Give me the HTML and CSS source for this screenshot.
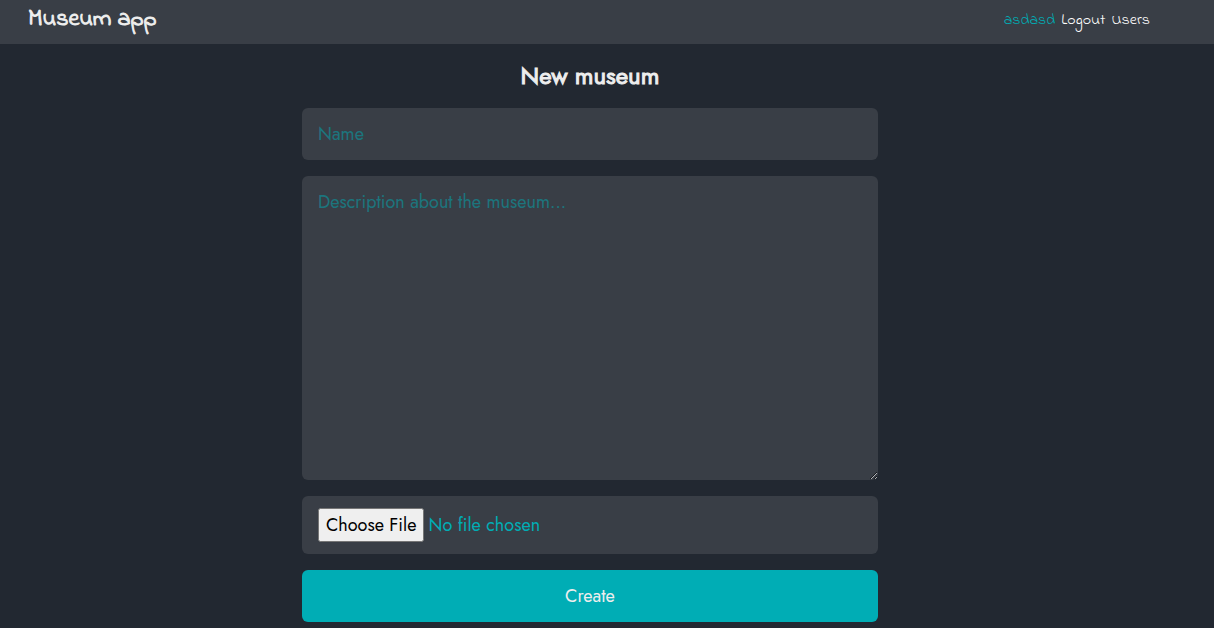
FILE: index.html
```html
<!DOCTYPE html>
<html lang="en">
<head>
<meta charset="utf-8">
<meta name="viewport" content="width=device-width, initial-scale=1">
<title>Museum app</title>
<link rel="stylesheet" href="styles.css">
</head>
<body>
<header class="navbar">
  <h1 class="brand"><a href="#">Museum app</a></h1>
  <nav class="nav-links">
    <a class="nav-user" href="#">asdasd</a>
    <a href="#">Logout</a>
    <a href="#">Users</a>
  </nav>
</header>
<main class="page">
  <h2 class="title">New museum</h2>
  <form class="form">
    <input class="field" type="text" placeholder="Name" aria-label="Name">
    <textarea class="field field-description" placeholder="Description about the museum..." aria-label="Description"></textarea>
    <input class="field field-file" type="file" aria-label="Museum image">
    <button class="submit" type="submit">Create</button>
  </form>
</main>
</body>
</html>
```
FILE: styles.css
```css
* {
  box-sizing: border-box;
}

body {
  margin: 0;
  background: #222831;
  color: #eeeeee;
  font-family: Jost, Lato, sans-serif;
  font-size: 18px;
}

a {
  color: inherit;
  text-decoration: none;
}

.navbar {
  display: flex;
  align-items: center;
  justify-content: space-between;
  padding: 0 64px 4px 28px;
  background: #393e46;
  font-family: "Indie Flower", Lato, cursive;
}

.brand {
  margin: 0;
  font-size: 24px;
  font-weight: 400;
  line-height: 40px;
  -webkit-text-stroke: 1px;
}

.nav-links {
  display: flex;
  gap: 6px;
  color: #ffffff;
  font-size: 16px;
  line-height: 40px;
}

.nav-user {
  color: #00adb5;
}

.page {
  padding-right: 34px;
}

.title {
  margin: 16px 0;
  font-size: 24px;
  font-weight: 400;
  line-height: 32px;
  text-align: center;
  -webkit-text-stroke: 1px;
}

.form {
  display: flex;
  flex-direction: column;
  gap: 16px;
  max-width: 576px;
  margin: 0 auto;
}

.field {
  width: 100%;
  padding: 12px 16px;
  border: 0;
  border-radius: 6px;
  background: #393e46;
  color: #00adb5;
  font: inherit;
  line-height: 28px;
}

.field::placeholder {
  color: #00adb5;
  opacity: 0.5;
}

.field-description {
  height: 304px;
}

.field-file::file-selector-button {
  padding: 2px 6px;
  font: inherit;
}

.submit {
  padding: 12px 16px;
  border: 0;
  border-radius: 6px;
  background: #00adb5;
  color: #eeeeee;
  font: inherit;
  line-height: 28px;
}
```
